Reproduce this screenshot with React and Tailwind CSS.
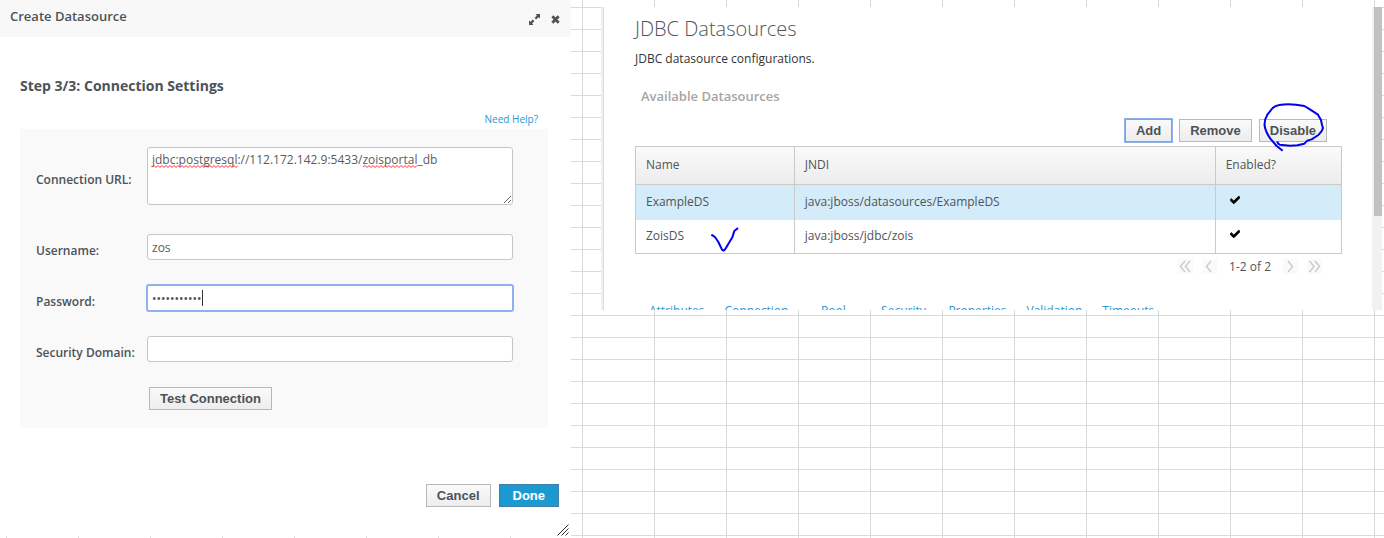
import React from "react";
import { FaCheck } from "react-icons/fa";

const buttonBase =
  "h-[23px] border text-[13px] leading-none font-bold font-['Liberation_Sans',sans-serif]";
const plainButton = `${buttonBase} border-[#b7b7b7] bg-linear-to-b from-[#fafafa] to-[#ededed] px-[10px] text-[#4d5258]`;
const primaryButton = `${buttonBase} border-[#3f7fa8] bg-[#1b9ad2] px-[13px] text-white`;
const field =
  "w-full rounded-[3px] border border-[#c6c6c6] bg-white px-1 text-xs text-[#5c5c5c] outline-none";

function Squiggle({ width, className }) {
  let d = "M0 2";
  for (let x = 2, up = true; x <= width; x += 2, up = !up) d += `L${x} ${up ? 0.5 : 2.5}`;
  return (
    <svg width={width} height="3" className={`pointer-events-none absolute ${className}`} aria-hidden="true">
      <path d={d} fill="none" stroke="#f33" strokeWidth="1" />
    </svg>
  );
}

function ExpandIcon() {
  return (
    <svg width="11" height="11" viewBox="0 0 11 11" aria-hidden="true">
      <path d="M6.500 0H11v4.500L9.500 3.200 7.100 5.400 5.600 3.900 7.900 1.500zM4.500 11H0V6.500L1.500 7.800 3.900 5.600 5.400 7.100 3.100 9.500z" fill="#4d5258" />
    </svg>
  );
}

function CloseIcon() {
  return (
    <svg width="9" height="9" viewBox="0 0 9 9" aria-hidden="true">
      <path d="M1.300 1.300L7.700 7.700M7.700 1.300L1.300 7.700" stroke="#4d5258" strokeWidth="2.800" />
    </svg>
  );
}

function FormRow({ id, label, children }) {
  return (
    <div className="grid grid-cols-[111px_1fr] items-center">
      <label htmlFor={id} className="pt-2 text-xs font-semibold whitespace-nowrap">
        {label}
      </label>
      {children}
    </div>
  );
}

function CreateDialog() {
  return (
    <section className="relative flex flex-col self-start bg-white text-[#4d5258]">
      <header className="flex h-[37px] items-center justify-between bg-[#f8f8f8] pr-[11px] pb-[3px] pl-[10px]">
        <h2 className="text-[13px] font-semibold">Create Datasource</h2>
        <div className="flex items-center gap-[11px] pt-1">
          <button aria-label="Maximize"><ExpandIcon /></button>
          <button aria-label="Close"><CloseIcon /></button>
        </div>
      </header>
      <div className="pr-[23px] pl-5">
        <h3 className="mt-[39px] text-sm leading-5 font-bold">Step 3/3: Connection Settings</h3>
        <div className="mt-[15px] flex justify-end pr-[10px]">
          <a href="#help" className="text-[10px] leading-4 text-[#2d96d2]">Need Help?</a>
        </div>
        <form className="mt-[2px] flex flex-col gap-[25px] bg-[#f9f9f9] pt-[18px] pr-[35px] pb-[18px] pl-4">
          <div className="pb-1">
            <FormRow id="url" label="Connection URL:">
              <div className="relative">
                <textarea
                  id="url"
                  spellCheck={false}
                  className={`${field} block h-[58px] resize py-1 leading-4`}
                  defaultValue="jdbc:postgresql://112.172.142.9:5433/zoisportal_db"
                />
                <Squiggle width={86} className="top-[18px] left-[5px]" />
                <Squiggle width={55} className="top-[18px] left-[216px]" />
              </div>
            </FormRow>
          </div>
          <FormRow id="username" label="Username:">
            <input id="username" className={`${field} h-[26px]`} defaultValue="zos" />
          </FormRow>
          <FormRow id="password" label="Password:">
            <div className="relative">
              <input
                id="password"
                type="password"
                className="block h-[26px] w-full rounded-[2px] border border-[#8db2ee] bg-white px-1 text-xs text-[#4d5258] ring-1 ring-[#8db2ee] outline-none"
                defaultValue="secret12345"
              />
              <span className="absolute top-[5px] left-[55px] h-4 w-px bg-[#333]" />
            </div>
          </FormRow>
          <FormRow id="domain" label="Security Domain:">
            <input id="domain" className={`${field} h-[26px]`} />
          </FormRow>
          <div className="flex pl-[113px]">
            <button type="button" className={plainButton}>Test Connection</button>
          </div>
        </form>
      </div>
      <footer className="mt-14 flex justify-end gap-2 pr-3 pb-[29px]">
        <button className={plainButton}>Cancel</button>
        <button className={primaryButton}>Done</button>
      </footer>
      <svg width="12" height="12" className="absolute right-[2px] bottom-0" aria-hidden="true">
        <path d="M0.500 11.500l11-11M4.500 11.500l7-7M8.500 11.500l3-3" stroke="#333" strokeWidth="1" />
      </svg>
    </section>
  );
}

const rows = [
  { name: "ExampleDS", jndi: "java:jboss/datasources/ExampleDS", selected: true },
  { name: "ZoisDS", jndi: "java:jboss/jdbc/zois", marked: true },
];
const tabs = ["Attributes", "Connection", "Pool", "Security", "Properties", "Validation", "Timeouts"];
const cell = "border-x border-[#c9c9c9] px-[10px] text-left font-normal";

function PagerButton({ label, d }) {
  return (
    <button aria-label={label} className="size-[15px] bg-[#fafafa]">
      <svg width="15" height="15" viewBox="0 0 15 15" aria-hidden="true">
        <path d={d} fill="none" stroke="#c9c9c9" strokeWidth="1.4" />
      </svg>
    </button>
  );
}

function DatasourcePanel() {
  return (
    <section className="mt-[7px] flex self-start border-l border-[#f0f0f0] bg-white">
      <div className="w-[2px] border-r border-[#dcdcdc] bg-[#f0f0f0]" />
      <div className="min-w-0 flex-1 pr-[30px] pl-[31px] text-xs text-[#505458]">
        <h1 className="mt-[7px] text-xl leading-[30px] font-light">JDBC Datasources</h1>
        <p className="mt-[7px] leading-4 text-[#333]">JDBC datasource configurations.</p>
        <h2 className="mt-[19px] pl-[6px] text-[13px] leading-5 font-semibold text-[#a5a5a5]">Available Datasources</h2>
        <div className="mt-[13px] flex justify-end gap-[7px] pr-[15px]">
          <button className={`${buttonBase} border-[#7ba3e0] bg-linear-to-b from-[#fafafa] to-[#ededed] px-[10px] text-[#4d5258] ring-1 ring-[#8db2ee]`}>Add</button>
          <button className={plainButton}>Remove</button>
          <div className="relative flex">
            <button className={plainButton}>Disable</button>
            <svg width="69" height="53" viewBox="594 300 207 159" className="pointer-events-none absolute -top-[19px] right-0" aria-hidden="true">
              <path
                d="M668 452L650 438L631 416Q617 396 614 378Q612 360 622 344L638 324Q645 317 658 315Q690 309 733 318L745 325L773 343L783 360L786 375L789 384Q786 396 775 405L755 418L742 422L733 431L712 436L690 437L660 434Q653 432 652 424"
                fill="none"
                stroke="#00e"
                strokeWidth="6"
                strokeLinejoin="round"
              />
            </svg>
          </div>
        </div>
        <table className="mt-1 w-full table-fixed border-collapse border border-[#c9c9c9]">
          <colgroup>
            <col className="w-[22.5%]" />
            <col />
            <col className="w-[17.900%]" />
          </colgroup>
          <thead>
            <tr className="h-[38px] border-b border-[#c9c9c9] bg-linear-to-b from-[#fafafa] to-[#ececec]">
              <th className={`${cell} pb-[2px]`}>Name</th>
              <th className={`${cell} pb-[2px]`}>JNDI</th>
              <th className={`${cell} pb-[2px]`}>Enabled?</th>
            </tr>
          </thead>
          <tbody>
            {rows.map((r) => (
              <tr key={r.name} className={r.selected ? "h-[35px] bg-[#d4ecf9]" : "h-[34px]"}>
                <td className={cell}>
                  <div className="relative">
                    {r.name}
                    {r.marked && (
                      <svg width="28" height="25" viewBox="333 140 84 75" className="absolute -top-[1px] left-[65px]" aria-hidden="true">
                        <path d="M334 163L345 170L355 185L366 208L371 211L376 206L397 171L403 152L414 143" fill="none" stroke="#00e" strokeWidth="6" strokeLinejoin="round" />
                      </svg>
                    )}
                  </div>
                </td>
                <td className={cell}>{r.jndi}</td>
                <td className={cell}>
                  <FaCheck size={10} color="#000" stroke="#000" strokeWidth={50} className="mb-1 ml-1" title="Enabled" />
                </td>
              </tr>
            ))}
          </tbody>
        </table>
        <nav className="mt-1 flex items-center justify-end pr-5" aria-label="Pages">
          <div className="flex gap-[9px]">
            <PagerButton label="First" d="M7 2L2.500 7.500L7 13M12 2L7.500 7.500L12 13" />
            <PagerButton label="Previous" d="M9 2L4.500 7.500L9 13" />
          </div>
          <span className="px-3 pt-px leading-4">1-2 of 2</span>
          <div className="flex gap-[9px]">
            <PagerButton label="Next" d="M5 2L9.500 7.500L5 13" />
            <PagerButton label="Last" d="M2.500 2L7 7.500L2.500 13M8 2L12.500 7.500L8 13" />
          </div>
        </nav>
        <div className="mt-7 flex h-[7px] overflow-hidden pl-1 text-xs leading-4 text-[#2d96d2]">
          {tabs.map((t) => (
            <a key={t} href={`#${t.toLowerCase()}`} className="min-w-[70px] px-[10px] text-center">{t}</a>
          ))}
        </div>
      </div>
      <div className="w-[10px] bg-[#f1f1f1] pl-[2px]">
        <div className="h-[69%] bg-[#c1c1c1]" />
      </div>
    </section>
  );
}

export default function App() {
  return (
    <main className="grid min-h-screen grid-cols-[571fr_781fr] gap-x-[30px] bg-white bg-[linear-gradient(to_right,#dadada_1px,transparent_1px),linear-gradient(to_bottom,#dadada_1px,transparent_1px)] bg-[size:72px_22px] bg-[position:6px_7px] pr-[2px] font-['Open_Sans',sans-serif]">
      <CreateDialog />
      <DatasourcePanel />
    </main>
  );
}
